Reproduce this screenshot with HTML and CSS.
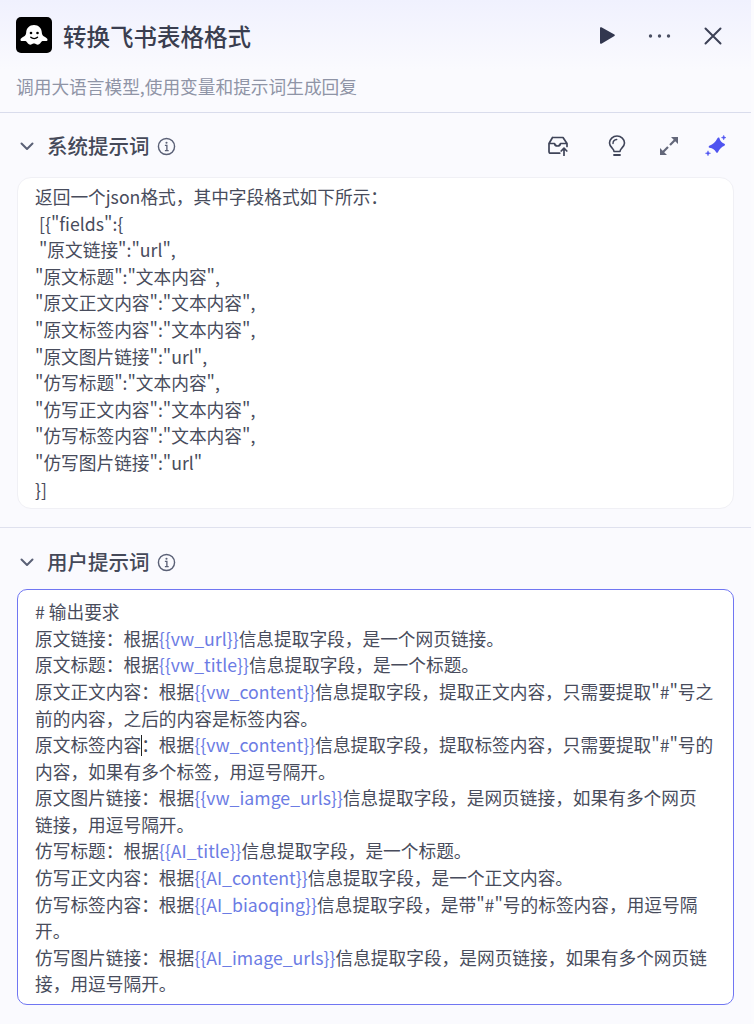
FILE: index.html
```html
<!DOCTYPE html>
<html lang="zh">
<head>
<meta charset="utf-8">
<title>转换飞书表格格式</title>
<link rel="stylesheet" href="styles.css">
</head>
<body>
<div class="panel">
  <header class="head">
    <div class="title-row">
      <div class="logo">
        <svg viewBox="0 0 36 36" width="36" height="36"><rect width="36" height="36" rx="5" fill="#000"/><path d="M18 8c-4.600 0-7.700 3.400-7.800 7.500-.1 2-.8 3.200-2.800 4.200-1.900.9-2.700 1.900-2.900 2.800-.2 1 .6 1.500 1.600 1.500h2.600c1.100 0 1.700.5 2.300 1.300.9 1.200 2.100 2.400 3.500 2.400 1 0 1.500-.8 2.200-1 .7-.2 1.900-.2 2.600 0 .7.2 1.200 1 2.200 1 1.400 0 2.600-1.200 3.500-2.400.6-.8 1.200-1.300 2.300-1.300h2.600c1 0 1.800-.5 1.600-1.500-.2-.9-1-1.900-2.900-2.800-2-1-2.700-2.200-2.800-4.200C25.700 11.400 22.600 8 18 8z" fill="#fff"/><circle cx="15" cy="16" r="1.300" fill="#000"/><circle cx="21.500" cy="16" r="1.300" fill="#000"/><path d="M14.800 20.300c1.800 1.700 4.900 1.700 6.700 0" stroke="#000" stroke-width="1.400" fill="none" stroke-linecap="round"/></svg>
      </div>
      <h1 class="title">转换飞书表格格式</h1>
      <div class="head-actions">
        <svg class="ic-play" viewBox="0 0 15 17" width="15" height="17"><path d="M0 1.200C0 .4.700-.1 1.400.3l13 7.300c.5.300.5 1.100 0 1.400l-13 7.700c-.7.400-1.400-.1-1.400-.9z" fill="#32374f"/></svg>
        <svg class="ic-more" viewBox="0 0 23 6" width="23" height="6"><circle cx="2.500" cy="3" r="1.700" fill="#4a4f63"/><circle cx="11.500" cy="3" r="1.700" fill="#4a4f63"/><circle cx="20.500" cy="3" r="1.700" fill="#4a4f63"/></svg>
        <svg class="ic-close" viewBox="0 0 18 18" width="18" height="18"><path d="M1.500 1.500l15 15M16.500 1.500l-15 15" stroke="#3c4156" stroke-width="2" stroke-linecap="round"/></svg>
      </div>
    </div>
    <p class="desc">调用大语言模型,使用变量和提示词生成回复</p>
  </header>

  <section class="sec sec-sys">
    <div class="sec-head">
      <svg class="chev" viewBox="0 0 14 9" width="14" height="9"><path d="M1.500 1.500L7 7l5.500-5.500" stroke="#5a6076" stroke-width="2" fill="none" stroke-linecap="round" stroke-linejoin="round"/></svg>
      <h2 class="sec-title">系统提示词</h2>
      <svg class="info" viewBox="0 0 20 20" width="19" height="19"><circle cx="10" cy="10" r="8.500" stroke="#5a6076" stroke-width="1.500" fill="none"/><circle cx="10" cy="6" r="1.100" fill="#5a6076"/><path d="M8.300 8.800H10.400V14M8.300 14.300h4" stroke="#5a6076" stroke-width="1.400" fill="none"/></svg>
      <div class="sec-tools">
        <svg class="t-box" viewBox="0 0 22 20" width="22" height="20"><path d="M5.500 1.500h10.500L20 7.500v3M5.500 1.500L2 7.500v8c0 1 .8 1.700 1.700 1.700h9M2 7.500h5.500c.3 1.600 1.500 2.500 3 2.500s2.700-.9 3-2.500H20" stroke="#3f4459" stroke-width="1.700" fill="none" stroke-linejoin="round" stroke-linecap="round"/><path d="M17 19.500v-7M14.200 15l2.800-2.800 2.800 2.800" stroke="#3f4459" stroke-width="1.700" fill="none" stroke-linecap="round" stroke-linejoin="round"/></svg>
        <svg class="t-bulb" viewBox="0 0 18 22" width="18" height="22"><path d="M6 16.500c0-1.600-.8-2.300-2-3.600C2.800 11.600 1.500 10.200 1.500 8a7.500 7 0 0 1 15 0c0 2.200-1.300 3.600-2.500 4.900-1.200 1.300-2 2-2 3.600z" stroke="#3f4459" stroke-width="1.600" fill="none" stroke-linejoin="round"/><path d="M6 20h6" stroke="#3f4459" stroke-width="1.800" stroke-linecap="round"/><path d="M5 8.500c0-2.300 1.600-3.800 3.700-4" stroke="#3f4459" stroke-width="1.400" fill="none" stroke-linecap="round"/></svg>
        <svg class="t-exp" viewBox="0 0 20 20" width="20" height="20"><path d="M12 1h7v7zM1 12v7h7z" fill="#63677a"/><path d="M16 4l-5 5M4 16l5-5" stroke="#63677a" stroke-width="2.200"/></svg>
        <svg class="t-star" viewBox="0 0 22 22" width="22" height="22"><path d="M13.500 3.500Q14.300 8 19 9.700 14.500 11.500 12 16.800 9.800 12.600 4.700 11.800 10.500 9.500 13.500 3.500z" fill="#4f54f0" stroke="#4f54f0" stroke-width="2" stroke-linejoin="round"/><path d="M18.700 .3c.2 1.400.9 2.100 2.300 2.300-1.400.2-2.100.9-2.300 2.300-.2-1.400-.9-2.100-2.300-2.300 1.400-.2 2.100-.9 2.300-2.300zM3 15.800c.3 1.500 1 2.200 2.600 2.500-1.600.3-2.300 1-2.600 2.500-.3-1.500-1-2.200-2.600-2.500 1.600-.3 2.300-1 2.600-2.500z" fill="#4f54f0" stroke="#4f54f0" stroke-width=".5"/></svg>
      </div>
    </div>
    <div class="box">
      <div>返回一个json格式，其中字段格式如下所示：</div>
      <div>&nbsp;[{"fields":{</div>
      <div>&nbsp;"原文链接":"url",</div>
      <div>"原文标题":"文本内容",</div>
      <div>"原文正文内容":"文本内容",</div>
      <div>"原文标签内容":"文本内容",</div>
      <div>"原文图片链接":"url",</div>
      <div>"仿写标题":"文本内容",</div>
      <div>"仿写正文内容":"文本内容",</div>
      <div>"仿写标签内容":"文本内容",</div>
      <div>"仿写图片链接":"url"</div>
      <div>}]</div>
    </div>
  </section>

  <section class="sec sec-user">
    <div class="sec-head">
      <svg class="chev" viewBox="0 0 14 9" width="14" height="9"><path d="M1.500 1.500L7 7l5.500-5.500" stroke="#5a6076" stroke-width="2" fill="none" stroke-linecap="round" stroke-linejoin="round"/></svg>
      <h2 class="sec-title">用户提示词</h2>
      <svg class="info" viewBox="0 0 20 20" width="19" height="19"><circle cx="10" cy="10" r="8.500" stroke="#5a6076" stroke-width="1.500" fill="none"/><circle cx="10" cy="6" r="1.100" fill="#5a6076"/><path d="M8.300 8.800H10.400V14M8.300 14.300h4" stroke="#5a6076" stroke-width="1.400" fill="none"/></svg>
    </div>
    <div class="box box-active">
      <div># 输出要求</div>
      <div>原文链接：根据<span class="var">{{vw_url}}</span>信息提取字段，是一个网页链接。</div>
      <div>原文标题：根据<span class="var">{{vw_title}}</span>信息提取字段，是一个标题。</div>
      <div>原文正文内容：根据<span class="var">{{vw_content}}</span>信息提取字段，提取正文内容，只需要提取"#"号之前的内容，之后的内容是标签内容。</div>
      <div>原文标签内容<span class="caret"></span>：根据<span class="var">{{vw_content}}</span>信息提取字段，提取标签内容，只需要提取"#"号的内容，如果有多个标签，用逗号隔开。</div>
      <div>原文图片链接：根据<span class="var">{{vw_iamge_urls}}</span>信息提取字段，是网页链接，如果有多个网页链接，用逗号隔开。</div>
      <div>仿写标题：根据<span class="var">{{AI_title}}</span>信息提取字段，是一个标题。</div>
      <div>仿写正文内容：根据<span class="var">{{AI_content}}</span>信息提取字段，是一个正文内容。</div>
      <div>仿写标签内容：根据<span class="var">{{AI_biaoqing}}</span>信息提取字段，是带"#"号的标签内容，用逗号隔开。</div>
      <div>仿写图片链接：根据<span class="var">{{AI_image_urls}}</span>信息提取字段，是网页链接，如果有多个网页链接，用逗号隔开。</div>
    </div>
  </section>
</div>
</body>
</html>
```

FILE: styles.css
```css
html, body {
  margin: 0;
  padding: 0;
  background: #fbfbfe;
}
body {
  width: 754px;
  height: 1024px;
  overflow: hidden;
  font-family: "Noto Sans CJK SC", "Noto Sans", sans-serif;
}
.panel {
  width: 751px;
  height: 1024px;
  background: #fafafe;
  box-sizing: border-box;
}
.head {
  height: 113px;
  box-sizing: border-box;
  padding: 17px 0 0 16px;
  background: linear-gradient(180deg, #f0f1fe 0%, #fafafe 62%);
  border-bottom: 1px solid #d9dcec;
}
.title-row {
  display: flex;
  align-items: center;
  height: 36px;
}
.logo {
  width: 36px;
  height: 36px;
  flex: none;
  display: flex;
}
.title {
  margin: 2px 0 0 11px;
  font-size: 23.500px;
  font-weight: 500;
  line-height: 36px;
  color: #3a3e50;
}
.head-actions {
  margin-left: auto;
  display: flex;
  align-items: center;
  gap: 33px;
  padding: 1px 29px 0 0;
}
.desc {
  margin: 20px 0 0;
  font-size: 17.700px;
  line-height: 26px;
  color: #8f94a6;
}
.sec-head {
  display: flex;
  align-items: center;
  height: 32px;
  padding-left: 20px;
}
.sec-sys {
  padding: 17px 17px 18px 17px;
  border-bottom: 1px solid #dfe1ee;
}
.sec-sys .sec-head,
.sec-user .sec-head {
  margin-left: -17px;
}
.sec-user {
  padding: 18px 17px 0 17px;
}
.chev {
  flex: none;
}
.sec-title {
  margin: 0 0 2px 13px;
  font-size: 20.500px;
  font-weight: 500;
  line-height: 32px;
  color: #454959;
}
.info {
  margin-left: 7px;
  flex: none;
}
.sec-tools {
  margin-left: auto;
  display: flex;
  align-items: center;
  padding-right: 7px;
}
.t-bulb { margin-left: 39px; }
.t-exp { margin-left: 33px; }
.t-star { margin-left: 26px; }
.box {
  width: 717px;
  box-sizing: border-box;
  margin-top: 15px;
  padding: 5px 17px 6px 17px;
  background: #fff;
  border: 1px solid #f0f0f5;
  border-radius: 14px;
  font-size: 17.700px;
  line-height: 26.600px;
  color: #484c5c;
}
.box-active {
  margin-top: 11px;
  padding: 8px 19.500px 7px 17px;
  border-color: #7076f2;
  border-radius: 10px;
}
.var {
  color: #6c7ce4;
}
.caret {
  display: inline-block;
  width: 1px;
  height: 21px;
  margin-right: -1px;
  vertical-align: -4px;
  background: #222;
}
```
